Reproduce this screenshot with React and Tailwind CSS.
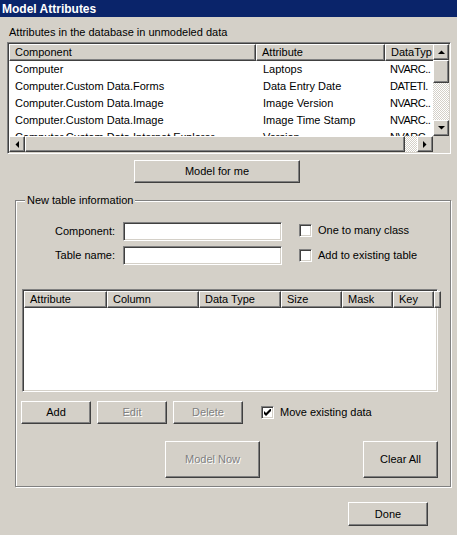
import React from 'react';

// Win classic 3D edges
const raised = "border border-t-white border-l-white border-r-[#404040] border-b-[#404040] shadow-[inset_-1px_-1px_#808080,inset_1px_1px_#d4d0c8] bg-[#d4d0c8]";
const sunken = "border border-t-[#808080] border-l-[#808080] border-r-white border-b-white shadow-[inset_1px_1px_#404040,inset_-1px_-1px_#d4d0c8]";
const hatch = "bg-[image:repeating-conic-gradient(#ffffff_0%_25%,#d4d0c8_0%_50%)] bg-[length:2px_2px]";

const Arrow = ({ dir }) => {
    const pts = {
        up: "0,4 7,4 3.5,0.5",
        down: "0,0 7,0 3.5,3.5",
        left: "4,0 4,7 0.5,3.5",
        right: "0,0 0,7 3.5,3.5",
    }[dir];
    const horiz = dir === 'left' || dir === 'right';
    return (
        <svg width={horiz ? 4 : 7} height={horiz ? 7 : 4} viewBox={horiz ? "0 0 4 7" : "0 0 7 4"}>
            <polygon points={pts} fill="#000" />
        </svg>
    );
};

const ScrollBtn = ({ dir }) => (
    <div className={`${raised} w-[16px] h-[16px] shrink-0 flex items-center justify-center`}>
        <Arrow dir={dir} />
    </div>
);

const Button = ({ children, disabled, className = '' }) => (
    <div className={`${raised} flex items-center justify-center ${disabled ? 'text-[#808080] [text-shadow:1px_1px_0_#ffffff]' : 'text-black'} ${className}`}>
        {children}
    </div>
);

const Checkbox = ({ checked, label }) => (
    <div className="flex items-center gap-[6px]">
        <div className={`${sunken} w-[13px] h-[13px] bg-white flex items-center justify-center`}>
            {checked && (
                <svg width="7" height="7" viewBox="0 0 7 7">
                    <path d="M0 2 L2 4 L7 -1 L7 2 L2 7 L0 5 Z" fill="#000" />
                </svg>
            )}
        </div>
        <span>{label}</span>
    </div>
);

const HeaderCell = ({ w, children }) => (
    <div className={`${raised} h-[17px] shrink-0 pl-[5px] leading-[14px] whitespace-nowrap overflow-hidden`} style={{ width: w }}>
        {children}
    </div>
);

const rows = [
    ['Computer', 'Laptops', 'NVARC..'],
    ['Computer.Custom Data.Forms', 'Data Entry Date', 'DATETI.'],
    ['Computer.Custom Data.Image', 'Image Version', 'NVARC..'],
    ['Computer.Custom Data.Image', 'Image Time Stamp', 'NVARC..'],
    ['Computer.Custom Data.Internet Explorer', 'Version', 'NVARC..'],
];

const App = () => {
    return (
        <div className="w-[457px] h-[535px] bg-[#d4d0c8] text-[11px] text-black font-['Liberation_Sans',Arial,sans-serif] overflow-hidden flex flex-col">
            <div className="h-[17px] bg-[#0a246a] text-white font-bold text-[12px] pl-[2px] flex items-center">Model Attributes</div>

            <div className="ml-[9px] mt-[9px] leading-[13px]">Attributes in the database in unmodeled data</div>

            {/* unmodeled attribute list */}
            <div className={`${sunken} ml-[7px] mt-[3px] w-[444px] h-[112px] bg-white flex flex-col p-[1px]`}>
                <div className="flex flex-1 min-h-0">
                    <div className="flex-1 min-w-0 overflow-hidden">
                        <div className="flex">
                            <HeaderCell w={247}>Component</HeaderCell>
                            <HeaderCell w={129}>Attribute</HeaderCell>
                            <HeaderCell w={60}>DataTyp</HeaderCell>
                        </div>
                        {rows.map((r, i) => (
                            <div key={i} className="flex h-[17px] items-center whitespace-nowrap">
                                <div className="w-[247px] shrink-0 pl-[6px] overflow-hidden">{r[0]}</div>
                                <div className="w-[129px] shrink-0 pl-[7px] overflow-hidden">{r[1]}</div>
                                <div className="w-[48px] shrink-0 pl-[5px] tracking-[-0.5px] overflow-hidden">{r[2]}</div>
                            </div>
                        ))}
                    </div>
                    <div className="w-[16px] flex flex-col">
                        <ScrollBtn dir="up" />
                        <div className={`${raised} w-[16px] h-[23px]`} />
                        <div className={`flex-1 ${hatch}`} />
                        <ScrollBtn dir="down" />
                    </div>
                </div>
                <div className="flex h-[16px]">
                    <ScrollBtn dir="left" />
                    <div className={`${raised} flex-1`} />
                    <div className={`w-[12px] ${hatch}`} />
                    <ScrollBtn dir="right" />
                    <div className="w-[16px] bg-[#d4d0c8]" />
                </div>
            </div>

            <Button className="ml-[134px] mt-[6px] w-[166px] h-[23px]">Model for me</Button>

            {/* group box */}
            <div className="relative ml-[15px] mt-[17px] w-[436px] h-[287px] border border-[#808080] shadow-[inset_1px_1px_#ffffff,1px_1px_#ffffff] flex flex-col">
                <span className="absolute left-[9px] top-[-7px] bg-[#d4d0c8] px-[2px] leading-[13px]">New table information</span>

                <div className="flex mt-[21px]">
                    <div className="flex flex-col gap-[5px]">
                        <div className="flex items-center h-[19px]">
                            <span className="w-[99px] text-right">Component:</span>
                            <div className={`${sunken} ml-[8px] w-[159px] h-[19px] bg-white`} />
                        </div>
                        <div className="flex items-center h-[19px]">
                            <span className="w-[99px] text-right">Table name:</span>
                            <div className={`${sunken} ml-[8px] w-[159px] h-[19px] bg-white`} />
                        </div>
                    </div>
                    <div className="ml-[17px] flex flex-col gap-[5px]">
                        <div className="h-[19px] flex items-center -mt-[1px]"><Checkbox label="One to many class" /></div>
                        <div className="h-[19px] flex items-center mt-[1px]"><Checkbox label="Add to existing table" /></div>
                    </div>
                </div>

                {/* new table columns */}
                <div className={`${sunken} ml-[6px] mt-[24px] w-[416px] h-[103px] bg-white p-[1px]`}>
                    <div className="flex">
                        <HeaderCell w={83}>Attribute</HeaderCell>
                        <HeaderCell w={92}>Column</HeaderCell>
                        <HeaderCell w={82}>Data Type</HeaderCell>
                        <HeaderCell w={61}>Size</HeaderCell>
                        <HeaderCell w={51}>Mask</HeaderCell>
                        <HeaderCell w={41}>Key</HeaderCell>
                        <HeaderCell w={2}></HeaderCell>
                    </div>
                </div>

                <div className="flex items-center ml-[5px] mt-[9px] h-[23px]">
                    <Button className="w-[70px] h-[23px]">Add</Button>
                    <Button disabled className="ml-[6px] w-[70px] h-[23px]">Edit</Button>
                    <Button disabled className="ml-[6px] w-[70px] h-[23px]">Delete</Button>
                    <div className="ml-[18px]"><Checkbox checked label="Move existing data" /></div>
                </div>

                <div className="flex ml-[149px] mt-[17px]">
                    <Button disabled className="w-[95px] h-[37px]">Model Now</Button>
                    <Button className="ml-[103px] w-[75px] h-[37px]">Clear All</Button>
                </div>
            </div>

            <Button className="ml-[348px] mt-[15px] w-[80px] h-[24px]">Done</Button>
        </div>
    );
};

export default App;
